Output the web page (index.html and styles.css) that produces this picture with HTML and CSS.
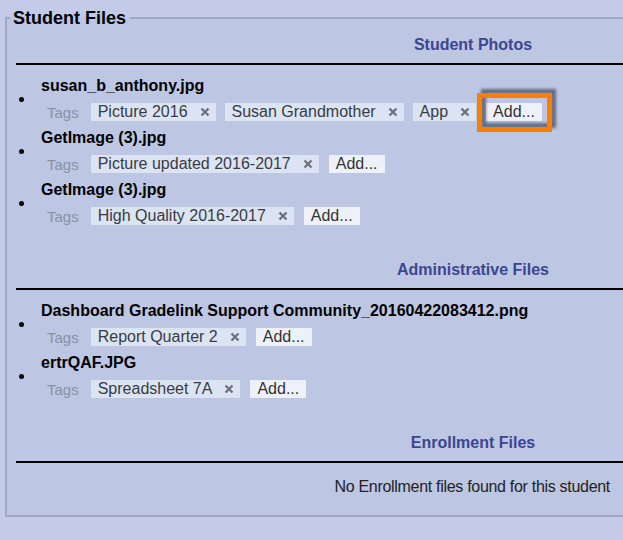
FILE: index.html
```html
<!DOCTYPE html>
<html lang="en">
<head>
  <meta charset="UTF-8" />
  <meta name="viewport" content="width=device-width, initial-scale=1.0"/>
  <title>Student Files</title>
  <link rel="stylesheet" href="styles.css">
</head>
<body>

<fieldset class="files">
  <legend>Student Files</legend>

  <section class="file-group">
    <h3 class="group-title">Student Photos</h3>
    <div class="group-rule"></div>
    <ul class="file-list">
      <li>
        <div class="file">
          <div class="file-name">susan_b_anthony.jpg</div>
          <div class="tags">
            <span class="tags-label">Tags</span>
            <span class="tag">Picture 2016<svg class="tag-x" viewBox="0 0 10 10"><path d="M1.5 1.5 8.5 8.5 M8.5 1.5 1.5 8.5"/></svg></span>
            <span class="tag">Susan Grandmother<svg class="tag-x" viewBox="0 0 10 10"><path d="M1.5 1.5 8.5 8.5 M8.5 1.5 1.5 8.5"/></svg></span>
            <span class="tag">App<svg class="tag-x" viewBox="0 0 10 10"><path d="M1.5 1.5 8.5 8.5 M8.5 1.5 1.5 8.5"/></svg></span>
            <span class="tag-add focused">Add...</span>
          </div>
        </div>
      </li>
      <li>
        <div class="file">
          <div class="file-name">GetImage (3).jpg</div>
          <div class="tags">
            <span class="tags-label">Tags</span>
            <span class="tag">Picture updated 2016-2017<svg class="tag-x" viewBox="0 0 10 10"><path d="M1.5 1.5 8.5 8.5 M8.5 1.5 1.5 8.5"/></svg></span>
            <span class="tag-add">Add...</span>
          </div>
        </div>
      </li>
      <li>
        <div class="file">
          <div class="file-name">GetImage (3).jpg</div>
          <div class="tags">
            <span class="tags-label">Tags</span>
            <span class="tag">High Quality 2016-2017<svg class="tag-x" viewBox="0 0 10 10"><path d="M1.5 1.5 8.5 8.5 M8.5 1.5 1.5 8.5"/></svg></span>
            <span class="tag-add">Add...</span>
          </div>
        </div>
      </li>
    </ul>
  </section>

  <section class="file-group">
    <h3 class="group-title">Administrative Files</h3>
    <div class="group-rule"></div>
    <ul class="file-list">
      <li>
        <div class="file">
          <div class="file-name">Dashboard Gradelink Support Community_20160422083412.png</div>
          <div class="tags">
            <span class="tags-label">Tags</span>
            <span class="tag">Report Quarter 2<svg class="tag-x" viewBox="0 0 10 10"><path d="M1.5 1.5 8.5 8.5 M8.5 1.5 1.5 8.5"/></svg></span>
            <span class="tag-add">Add...</span>
          </div>
        </div>
      </li>
      <li>
        <div class="file">
          <div class="file-name">ertrQAF.JPG</div>
          <div class="tags">
            <span class="tags-label">Tags</span>
            <span class="tag">Spreadsheet 7A<svg class="tag-x" viewBox="0 0 10 10"><path d="M1.5 1.5 8.5 8.5 M8.5 1.5 1.5 8.5"/></svg></span>
            <span class="tag-add">Add...</span>
          </div>
        </div>
      </li>
    </ul>
  </section>

  <section class="file-group">
    <h3 class="group-title">Enrollment Files</h3>
    <div class="group-rule"></div>
    <p class="empty">No Enrollment files found for this student</p>
  </section>
</fieldset>

</body>
</html>
```

FILE: styles.css
```css
body {
  font-family: 'Liberation Sans', Arial, sans-serif;
  margin: 0;
  background: #c3cbe9;
  overflow: hidden;
}

.files {
  margin: 8px 0 0 5px;
  padding: 0 0 18px 9px;
  border: 2px solid #a0a8c6;
  background: #bdc7e3;
  box-sizing: border-box;
  width: 637px;
}

.files legend {
  font-size: 18px;
  font-weight: bold;
  line-height: 20px;
  padding: 0 4px 0 3px;
  margin-left: -6px;
  color: #000;
}

.file-group {
  margin-top: 31px;
}

.file-group:first-of-type {
  margin-top: 7px;
}

.group-title {
  margin: 0 0 8px;
  padding-left: 290px;
  font-size: 16px;
  line-height: 20px;
  text-align: center;
  color: #3c4690;
}

.group-rule {
  height: 2px;
  background: #000;
}

.file-list {
  list-style: none;
  margin: 8px 0 0;
  padding: 0;
}

.file-list li {
  display: flex;
  align-items: center;
}

.file-list li::before {
  content: "";
  width: 5px;
  height: 5px;
  border-radius: 50%;
  background: #000;
  margin: 0 17px 0 3px;
  flex: none;
}

.file-name {
  font-size: 16px;
  font-weight: bold;
  line-height: 26px;
  color: #000;
  white-space: nowrap;
}

.tags {
  display: flex;
  align-items: center;
  gap: 9px;
  height: 26px;
  font-size: 16px;
  white-space: nowrap;
}

.tags-label {
  margin: 0 3px 0 6px;
  font-size: 15px;
  color: #8a90a2;
}

.tag {
  display: flex;
  align-items: center;
  height: 18px;
  padding: 0 6px 0 7px;
  background: #dce4f3;
  color: #383c44;
}

.tag-x {
  width: 10px;
  height: 10px;
  margin-left: 12px;
  fill: none;
  stroke: #6c717f;
  stroke-width: 2.3;
}

.tag-add {
  position: relative;
  height: 18px;
  line-height: 18px;
  padding: 0 7px;
  margin-left: 1px;
  background: #eef1f9;
  color: #333;
}

.tag-add.focused::before,
.tag-add.focused::after {
  content: "";
  position: absolute;
  top: -10px;
  right: -10px;
  bottom: -11px;
  left: -9px;
  border: 5px solid #ff7d00;
}

.tag-add.focused::before {
  border-color: rgba(60, 62, 82, 0.7);
  transform: translate(4px, -4px);
  filter: blur(1.5px);
}

.empty {
  margin: 14px 0 0;
  padding-right: 30px;
  font-size: 16px;
  line-height: 20px;
  letter-spacing: -0.3px;
  text-align: right;
  color: #222;
}
```
